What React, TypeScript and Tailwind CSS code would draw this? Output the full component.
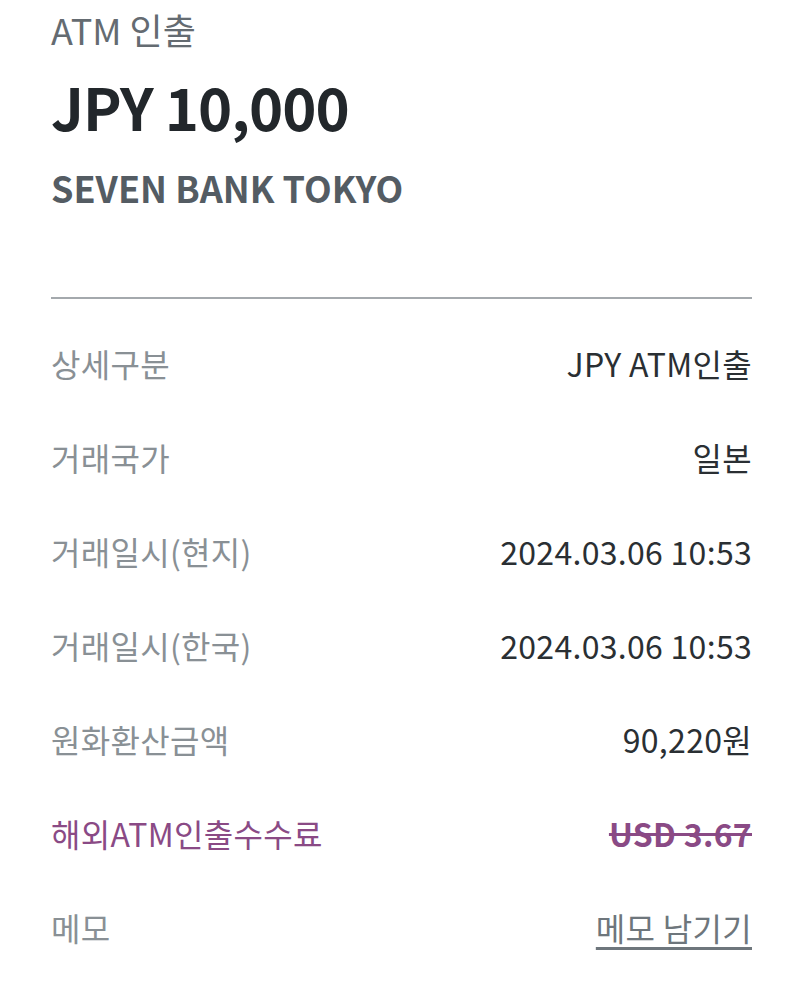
const rows: { label: string; value: string; kind?: "fee" | "memo" }[] = [
  { label: "상세구분", value: "JPY ATM인출" },
  { label: "거래국가", value: "일본" },
  { label: "거래일시(현지)", value: "2024.03.06 10:53" },
  { label: "거래일시(한국)", value: "2024.03.06 10:53" },
  { label: "원화환산금액", value: "90,220원" },
  { label: "해외ATM인출수수료", value: "USD 3.67", kind: "fee" },
  { label: "메모", value: "메모 남기기", kind: "memo" },
];

export default function App() {
  return (
    <div className="min-h-screen w-full bg-white px-[51px] pr-[48px] [font-family:'Noto_Sans_CJK_KR','Noto_Sans',sans-serif]">
      <div className="h-[58px] flex items-center text-[36px] text-[#646b71]">ATM 인출</div>
      <div className="h-[96px] flex items-center text-[58px] font-bold text-[#22272b] tracking-[-1px]">JPY 10,000</div>
      <div className="mt-[10px] h-[46px] flex items-center text-[36px] font-bold text-[#545c63]">SEVEN BANK TOKYO</div>
      <div className="h-[87px]" />
      <div className="h-[2px] bg-[#a4a9ad]" />
      <div className="pt-[17px]">
        {rows.map((r) => (
          <div key={r.label} className="h-[94px] flex items-center justify-between text-[32px] tracking-[0.3px]">
            <span className={r.kind === "fee" ? "text-[#8a4a85]" : "text-[#899095]"}>{r.label}</span>
            {r.kind === "fee" ? (
              <span className="font-bold text-[#8a4a85] line-through">{r.value}</span>
            ) : r.kind === "memo" ? (
              <span className="text-[#6e767c] underline underline-offset-[6px]">{r.value}</span>
            ) : (
              <span className="text-[#2a2f33]">{r.value}</span>
            )}
          </div>
        ))}
      </div>
    </div>
  );
}
